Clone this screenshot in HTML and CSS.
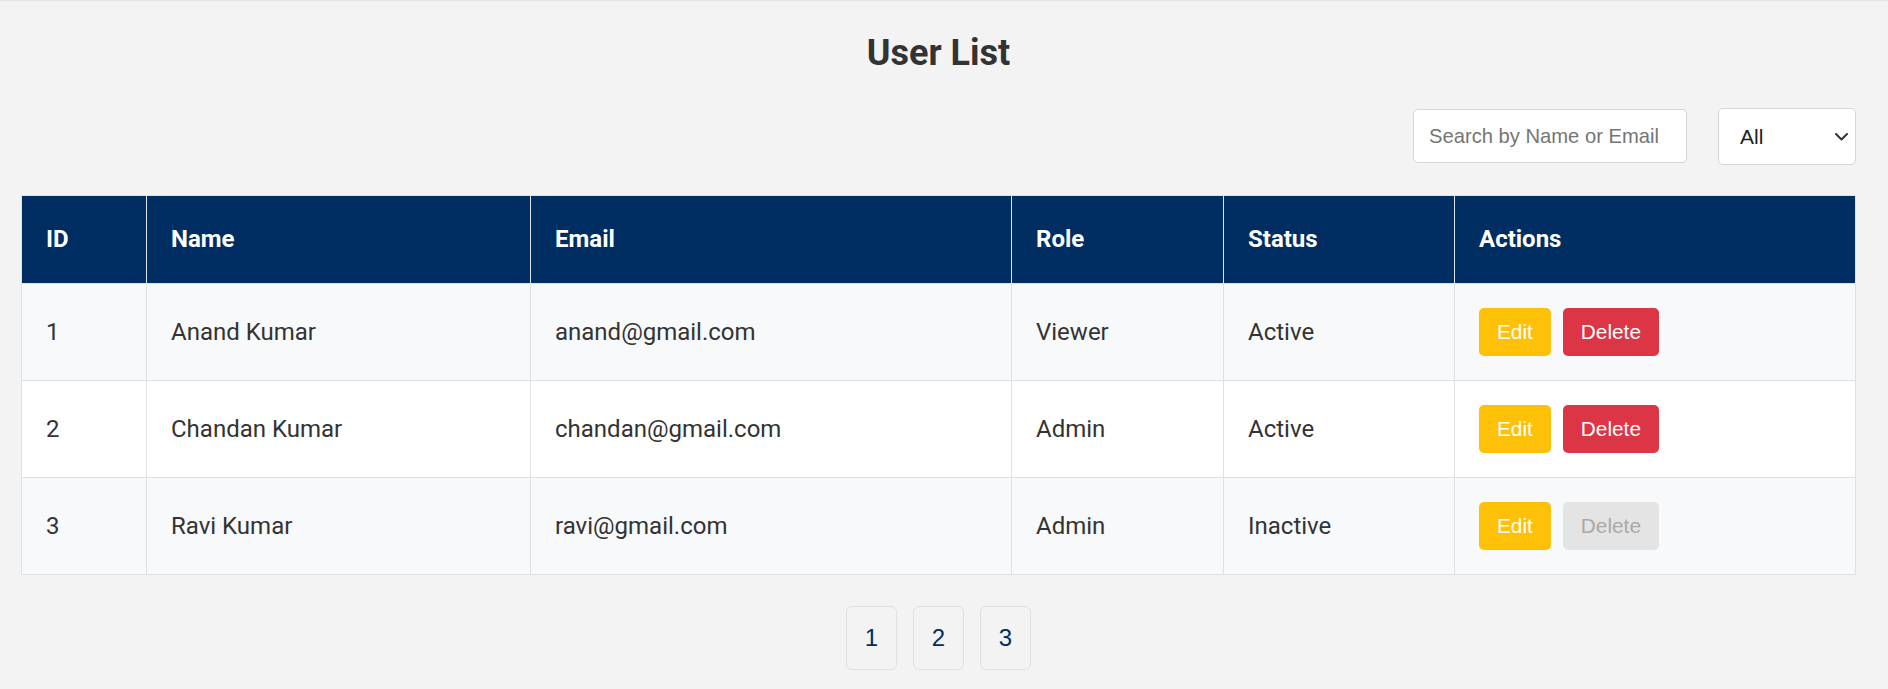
FILE: index.html
```html
<!DOCTYPE html>
<html lang="en">
<head>
<meta charset="utf-8">
<title>User List</title>
<link rel="stylesheet" href="styles.css">
</head>
<body>
<div class="page">
  <h1 class="title">User List</h1>
  <div class="toolbar">
    <input class="search" type="text" placeholder="Search by Name or Email">
    <div class="select-wrap">
      <select class="filter">
        <option>All</option>
        <option>Active</option>
        <option>Inactive</option>
      </select>
      <svg class="chevron" width="13" height="8" viewBox="0 0 13 8" aria-hidden="true"><path d="M1 1l5.5 5.5L12 1" fill="none" stroke="#333" stroke-width="2" stroke-linecap="round" stroke-linejoin="round"/></svg>
    </div>
  </div>
  <table class="users">
    <colgroup>
      <col class="c-id"><col class="c-name"><col class="c-email"><col class="c-role"><col class="c-status"><col class="c-actions">
    </colgroup>
    <thead>
      <tr><th>ID</th><th>Name</th><th>Email</th><th>Role</th><th>Status</th><th>Actions</th></tr>
    </thead>
    <tbody>
      <tr>
        <td>1</td><td>Anand Kumar</td><td>anand@gmail.com</td><td>Viewer</td><td>Active</td>
        <td><div class="actions"><button class="btn btn-edit">Edit</button><button class="btn btn-delete">Delete</button></div></td>
      </tr>
      <tr>
        <td>2</td><td>Chandan Kumar</td><td>chandan@gmail.com</td><td>Admin</td><td>Active</td>
        <td><div class="actions"><button class="btn btn-edit">Edit</button><button class="btn btn-delete">Delete</button></div></td>
      </tr>
      <tr>
        <td>3</td><td>Ravi Kumar</td><td>ravi@gmail.com</td><td>Admin</td><td>Inactive</td>
        <td><div class="actions"><button class="btn btn-edit">Edit</button><button class="btn btn-delete" disabled>Delete</button></div></td>
      </tr>
    </tbody>
  </table>
  <div class="pagination">
    <button class="page-btn">1</button>
    <button class="page-btn">2</button>
    <button class="page-btn">3</button>
  </div>
</div>
</body>
</html>
```
FILE: styles.css
```css
* { box-sizing: border-box; }
html, body { margin: 0; padding: 0; }
body {
  background: #f3f3f3;
  border-top: 1px solid #e3e3e3;
  font-family: Roboto, "Liberation Sans", sans-serif;
  color: #333;
}
.page {
  padding: 24px 32px 0 21px;
}
.title {
  margin: 0 0 25px;
  font-size: 36px;
  line-height: 1.6;
  font-weight: 700;
  text-align: center;
  color: #333;
}
.toolbar {
  display: flex;
  justify-content: flex-end;
  align-items: center;
  gap: 31px;
  margin-bottom: 30px;
}
.search {
  width: 274px;
  height: 54px;
  padding: 0 15px;
  font-family: "Liberation Sans", Arial, sans-serif;
  font-size: 20.2px;
  color: #333;
  background: #fff;
  border: 1px solid #d6d6d6;
  border-radius: 5px;
  outline: none;
}
.search::placeholder { color: #757575; }
.select-wrap {
  position: relative;
  display: flex;
}
.filter {
  appearance: none;
  -webkit-appearance: none;
  width: 138px;
  height: 57px;
  padding: 0 30px 0 21px;
  font-family: "Liberation Sans", Arial, sans-serif;
  font-size: 21px;
  color: #222;
  background: #fff;
  border: 1px solid #d6d6d6;
  border-radius: 5px;
  outline: none;
}
.chevron {
  position: absolute;
  right: 8px;
  top: 25px;
  pointer-events: none;
}
.users {
  width: 100%;
  table-layout: fixed;
  border-collapse: collapse;
  background: #fff;
  font-size: 24px;
  line-height: 1.6;
}
.c-id { width: 125px; }
.c-name { width: 384px; }
.c-email { width: 481px; }
.c-role { width: 212px; }
.c-status { width: 231px; }
.c-actions { width: auto; }
.users th,
.users td {
  border: 1px solid #dee2e6;
  padding: 24px;
  text-align: left;
  vertical-align: middle;
}
.users th {
  padding-top: 24.5px;
  padding-bottom: 24.5px;
  background: #002d62;
  color: #fff;
  font-weight: 700;
}
.users tbody tr:nth-child(odd) { background: #f8f9fa; }
.users tbody tr:nth-child(even) { background: #fff; }
.users td { color: #333; }
.actions {
  display: flex;
  gap: 12px;
}
.btn {
  height: 48px;
  padding: 0 18px;
  border: none;
  border-radius: 5px;
  font-family: "Liberation Sans", Arial, sans-serif;
  font-size: 20.8px;
  color: #fff;
  cursor: pointer;
}
.btn-edit { background: #ffc107; }
.btn-delete { background: #dc3545; }
.btn-delete:disabled {
  background: #e4e4e4;
  color: #a9a9a9;
  cursor: not-allowed;
}
.pagination {
  display: flex;
  justify-content: center;
  gap: 16px;
  margin-top: 31px;
}
.page-btn {
  width: 51px;
  height: 64px;
  padding: 0;
  background: #f3f3f3;
  border: 1px solid #dcdfe3;
  border-radius: 6px;
  font-family: "Liberation Sans", Arial, sans-serif;
  font-size: 24px;
  color: #002d62;
}
```
